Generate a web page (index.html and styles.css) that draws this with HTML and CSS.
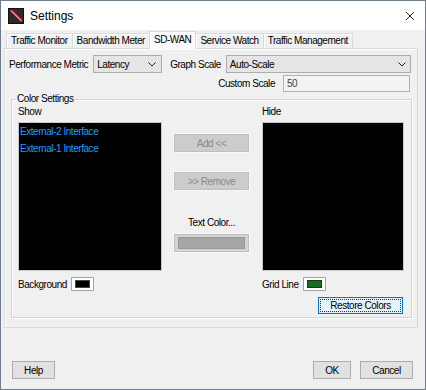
FILE: index.html
```html
<!DOCTYPE html>
<html>
<head>
    <meta charset="UTF-8">
    <link rel="stylesheet" href="styles.css">
</head>
<body>
    <div class="window">
        <div class="titlebar">
            <svg class="app-icon" width="16" height="16" viewBox="0 0 16 16">
                <rect x="0.5" y="0.5" width="15" height="15" fill="#2b2b2b" stroke="#111"/>
                <path d="M2 3 L5 2 L14 11 L13 14 Z" fill="#c8102e"/>
                <path d="M3 2.5 L13.5 13" stroke="#fff" stroke-width="1"/>
            </svg>
            <span class="title">Settings</span>
            <svg class="close" width="10" height="10" viewBox="0 0 10 10">
                <path d="M1 1 L9 9 M9 1 L1 9" stroke="#222" stroke-width="1"/>
            </svg>
        </div>

        <div class="content">
            <div class="tabs">
                <div class="tab">Traffic Monitor</div>
                <div class="tab">Bandwidth Meter</div>
                <div class="tab active">SD-WAN</div>
                <div class="tab">Service Watch</div>
                <div class="tab">Traffic Management</div>
            </div>

            <div class="tab-panel">
                <div class="row metric-row">
                    <span class="label">Performance Metric</span>
                    <div class="combo combo-metric">
                        <span>Latency</span>
                        <svg width="8" height="5" viewBox="0 0 8 5"><path d="M0.5 0.5 L4 4 L7.5 0.5" stroke="#222" fill="none"/></svg>
                    </div>
                    <span class="label graph-label">Graph Scale</span>
                    <div class="combo combo-scale">
                        <span>Auto-Scale</span>
                        <svg width="8" height="5" viewBox="0 0 8 5"><path d="M0.5 0.5 L4 4 L7.5 0.5" stroke="#222" fill="none"/></svg>
                    </div>
                </div>

                <div class="row scale-row">
                    <span class="label">Custom Scale</span>
                    <div class="text-field">50</div>
                </div>

                <fieldset class="group">
                    <legend>Color Settings</legend>
                    <div class="group-body">
                        <div class="col">
                            <div class="col-title">Show</div>
                            <div class="list">
                                <div class="list-item">External-2 Interface</div>
                                <div class="list-item">External-1 Interface</div>
                            </div>
                            <div class="swatch-row">
                                <span class="label">Background</span>
                                <span class="swatch"><span class="swatch-fill black"></span></span>
                            </div>
                        </div>

                        <div class="col middle">
                            <button class="btn disabled add-btn">Add &lt;&lt;</button>
                            <button class="btn disabled remove-btn">&gt;&gt; Remove</button>
                            <div class="text-color-label">Text Color...</div>
                            <button class="btn color-btn"><span class="color-fill"></span></button>
                        </div>

                        <div class="col">
                            <div class="col-title">Hide</div>
                            <div class="list"></div>
                            <div class="swatch-row">
                                <span class="label">Grid Line</span>
                                <span class="swatch"><span class="swatch-fill green"></span></span>
                            </div>
                            <div class="restore-row">
                                <button class="btn focused"><span class="focus-ring">Restore Colors</span></button>
                            </div>
                        </div>
                    </div>
                </fieldset>
            </div>

            <div class="footer">
                <button class="btn help-btn">Help</button>
                <div class="footer-right">
                    <button class="btn ok-btn">OK</button>
                    <button class="btn cancel-btn">Cancel</button>
                </div>
            </div>
        </div>
    </div>
</body>
</html>
```

FILE: styles.css
```css
body {
    margin: 0;
    font-family: "Liberation Sans", Arial, sans-serif;
    font-size: 10px;
    letter-spacing: -0.45px;
    color: #000;
}

.window {
    width: 426px;
    height: 390px;
    box-sizing: border-box;
    border: 1px solid #6f7d8b;
    background-color: #f0f0f0;
    display: flex;
    flex-direction: column;
}

/* Title bar */
.titlebar {
    height: 29px;
    background-color: #fff;
    display: flex;
    align-items: center;
    padding: 0 8px 0 7px;
}

.app-icon {
    margin-right: 6px;
}

.title {
    font-size: 12px;
    letter-spacing: 0;
    flex: 1;
}

.close {
    margin-right: 2px;
}

.content {
    padding: 0 7px 0 3px;
    display: flex;
    flex-direction: column;
}

/* Tabs */
.tabs {
    display: flex;
    align-items: flex-end;
    padding-left: 2px;
    height: 17px;
    margin-top: 1px;
}

.tab {
    height: 14px;
    line-height: 14px;
    padding: 0 4px;
    border: 1px solid #d9d9d9;
    border-bottom: none;
    box-shadow: inset 1px 1px 0 #fff;
    background-color: #f0f0f0;
    margin-right: -1px;
}

.tab.active {
    line-height: 15px;
    background-color: #f9f9f9;
    position: relative;
    z-index: 1;
    margin-bottom: -1px;
    height: 17px;
}

.tab-panel {
    height: 280px;
    box-sizing: border-box;
    border: 1px solid #d9d9d9;
    box-shadow: inset 1px 1px 0 #fff;
    padding: 6px 6px 0 4px;
}

.row {
    display: flex;
    align-items: center;
}

.metric-row {
    height: 18px;
}

.graph-label {
    margin-left: 8px;
}

.combo {
    height: 18px;
    box-sizing: border-box;
    border: 1px solid #acacac;
    background-color: #e5e5e5;
    display: flex;
    align-items: center;
    justify-content: space-between;
    padding: 0 5px 0 3px;
    margin-left: 5px;
}

.combo-metric {
    width: 69px;
}

.combo-scale {
    flex: 1;
    margin-left: 5px;
    padding-right: 4px;
}

.scale-row {
    height: 17px;
    margin-top: 2px;
    justify-content: flex-end;
}

.text-field {
    width: 127px;
    height: 17px;
    box-sizing: border-box;
    border: 1px solid #b2b2b2;
    background-color: #f3f3f3;
    color: #444;
    line-height: 15px;
    padding-left: 3px;
    margin: 0 1px 0 8px;
}

/* Color settings group */
.group {
    margin: 1px -1px 0 2px;
    padding: 0 6px 3px 6px;
    border: 1px solid #d3d3d3;
    box-shadow: 1px 1px 0 #fff, inset 1px 1px 0 #fff;
}

.group legend {
    padding: 0 1px;
    margin-left: -2px;
    line-height: 12px;
}

.group-body {
    display: grid;
    grid-template-columns: 144px 75px 143px;
    column-gap: 12px;
    margin-top: 1px;
}

.group-body .col:last-child {
    margin-left: 1px;
}

.col-title {
    line-height: 12px;
    margin-bottom: 4px;
}

.list {
    height: 149px;
    box-sizing: border-box;
    background-color: #000;
    border: 1px solid #c8c8c8;
    padding-left: 1px;
}

.list-item {
    height: 17px;
    line-height: 17px;
    color: #1e9bff;
}

.swatch-row {
    display: flex;
    align-items: center;
    margin-top: 6px;
    height: 14px;
}

.swatch {
    width: 23px;
    height: 14px;
    box-sizing: border-box;
    border: 1px solid #a5a5a5;
    background-color: #fff;
    padding: 2px 3px;
    margin-left: 4px;
    display: flex;
}

.swatch-fill {
    flex: 1;
    border: 1px solid #444;
}

.swatch-fill.black {
    background-color: #000;
}

.swatch-fill.green {
    background-color: #166b1e;
    border-color: #0e3f12;
}

.restore-row {
    display: flex;
    justify-content: flex-end;
    margin-top: 6px;
    padding-right: 1px;
}

/* Buttons */
.btn {
    font-family: inherit;
    font-size: 10px;
    letter-spacing: -0.45px;
    height: 18px;
    box-sizing: border-box;
    border: 1px solid #adadad;
    background-color: #e1e1e1;
    color: #000;
    padding: 0;
    margin: 0;
    display: flex;
    align-items: center;
    justify-content: center;
}

.middle {
    padding-top: 28px;
    display: flex;
    flex-direction: column;
}

.btn.disabled {
    color: #8a8a8a;
    background-color: #cccccc;
    border-color: #bfbfbf;
    box-shadow: 0 0 0 1px #f8f8f8;
}

.remove-btn {
    margin-top: 20px;
}

.text-color-label {
    text-align: center;
    line-height: 12px;
    margin-top: 27px;
    margin-bottom: 5px;
}

.color-btn {
    border-color: #bfbfbf;
    background-color: #d4d4d4;
    padding: 2px 3px;
    box-shadow: 0 0 0 1px #f8f8f8;
}

.color-fill {
    display: block;
    width: 100%;
    height: 100%;
    background-color: #a6a6a6;
    border: 1px solid #999;
    box-sizing: border-box;
}

.btn.focused {
    width: 85px;
    height: 17px;
    border-color: #0078d7;
    background-color: #e5f1fb;
    padding: 1px;
}

.focus-ring {
    display: flex;
    align-items: center;
    justify-content: center;
    width: 100%;
    height: 100%;
    box-sizing: border-box;
    border: 1px dotted #333;
}

/* Footer */
.footer {
    display: flex;
    justify-content: space-between;
    margin-top: 33px;
    padding: 0 5px 0 8px;
}

.footer .btn {
    height: 18px;
}

.help-btn {
    width: 43px;
}

.footer-right {
    display: flex;
    gap: 9px;
}

.ok-btn {
    width: 38px;
}

.cancel-btn {
    width: 53px;
}
```
